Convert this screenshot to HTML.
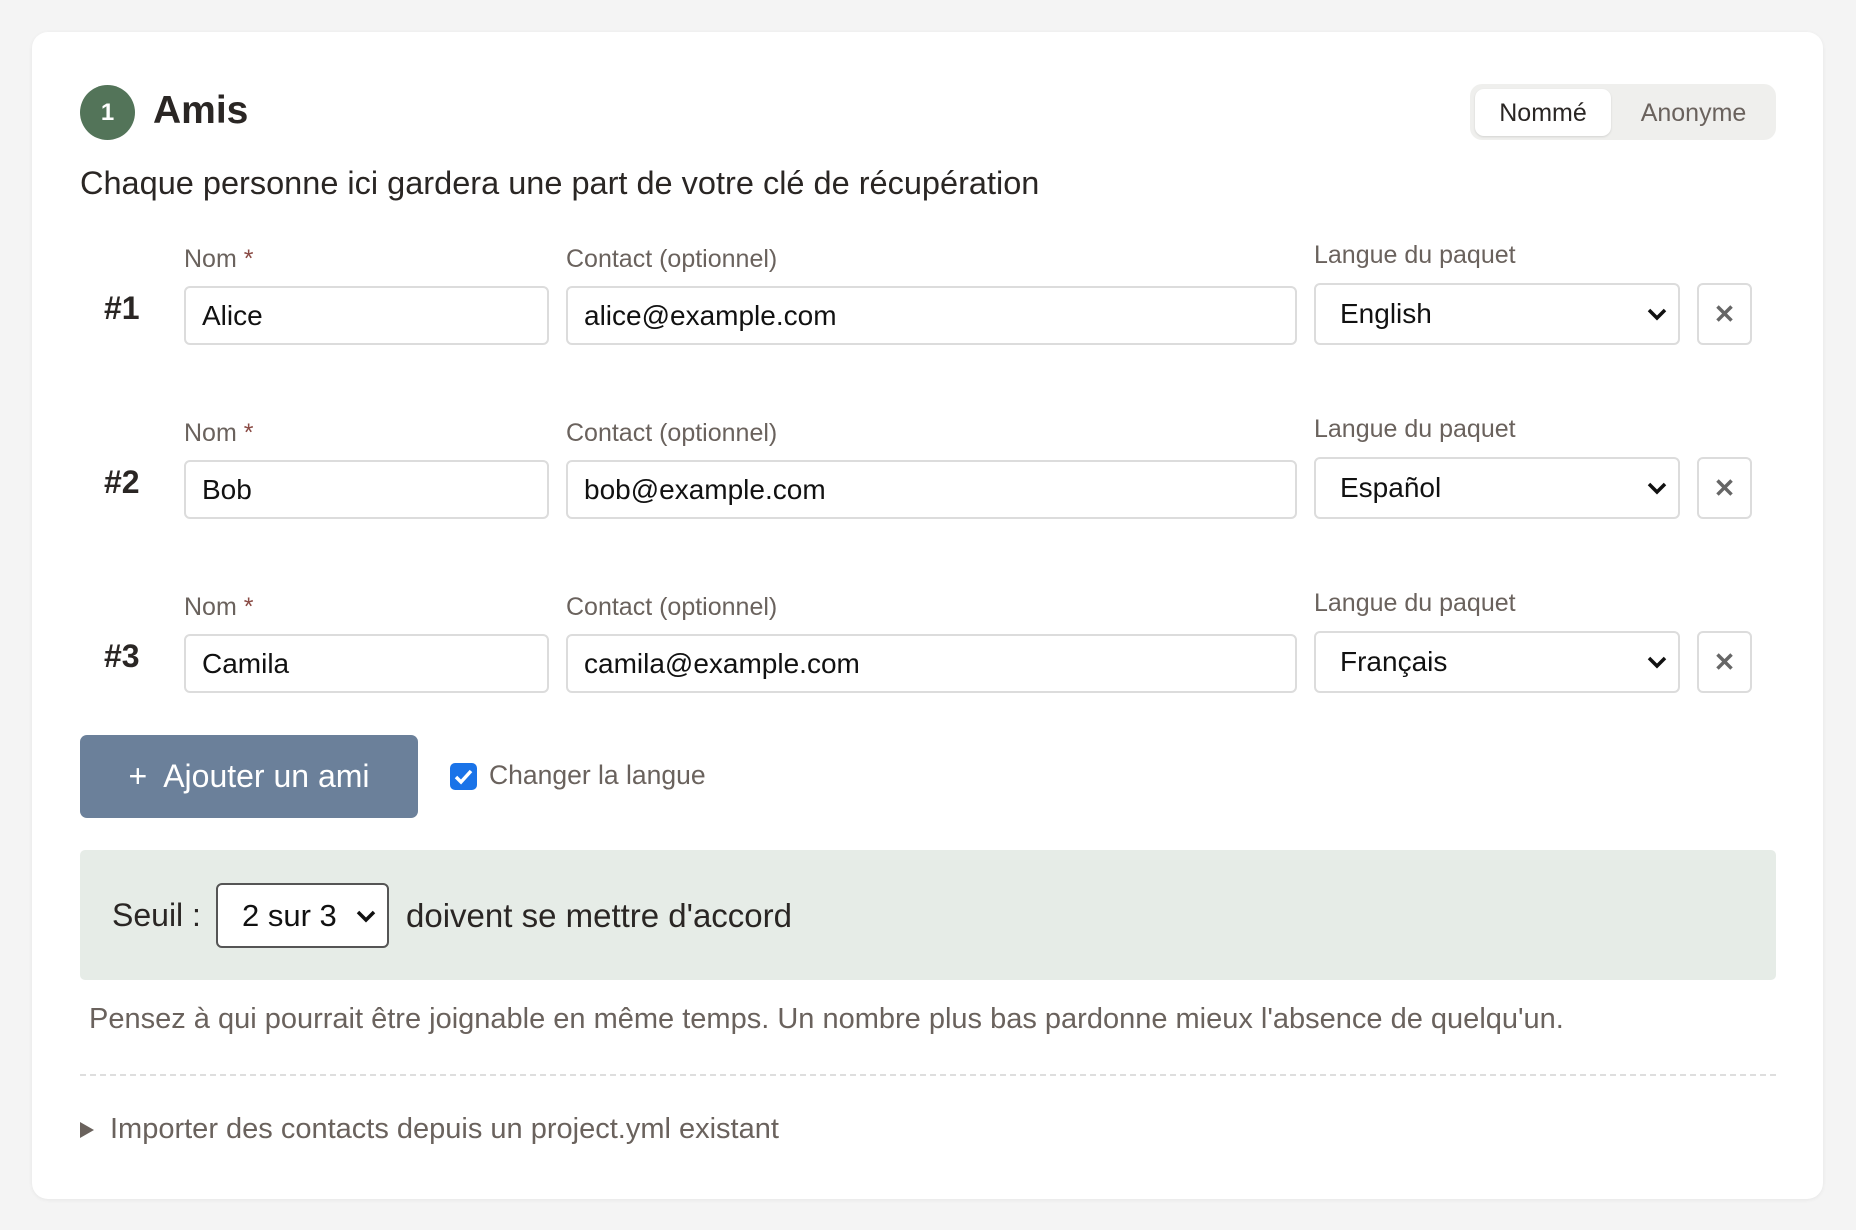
<!DOCTYPE html>
<html><head><meta charset="utf-8"><style>
*{box-sizing:border-box;margin:0;padding:0}
body{width:1856px;height:1230px;background:#f4f4f4;font-family:"Liberation Sans",Arial,sans-serif;position:relative;overflow:hidden;color:#2a2624}
.card{position:absolute;left:32px;top:32px;width:1791px;height:1167px;background:#fff;border-radius:16px;box-shadow:0 1px 4px rgba(0,0,0,.06)}
.a{position:absolute}
.circ{left:80px;top:85px;width:55px;height:55px;border-radius:50%;background:#537459;color:#fff;font-size:24px;font-weight:bold;text-align:center;line-height:55px}
.title{left:153px;top:89px;font-size:39px;font-weight:bold;color:#2a2624}
.tog{left:1470px;top:84px;width:306px;height:56px;background:#efefed;border-radius:12px}
.pill{left:1475px;top:89px;width:136px;height:47px;background:#fff;border-radius:9px;box-shadow:0 1px 2px rgba(0,0,0,.12);font-size:25px;text-align:center;line-height:49px;color:#2a2624}
.anon{left:1611px;top:89px;width:165px;height:47px;font-size:25px;text-align:center;line-height:49px;color:#6a625d}
.sub{left:80px;top:165px;font-size:32.5px;color:#2a2624}
.lbl{font-size:25px;color:#6a625d}
.lbl b{color:#8a4b45;font-weight:normal}
.inp{border:2px solid #dcdcdc;border-radius:6px;background:#fff;font-size:28px;color:#111;padding-left:16px;display:flex;align-items:center}
.num{font-size:32px;font-weight:bold;color:#2a2624}
.x{border:2px solid #dcdcdc;border-radius:6px;background:#fff;color:#666;font-size:26px;font-weight:bold;display:flex;align-items:center;justify-content:center}
.chev{position:absolute;right:10px;top:50%;margin-top:-7px}
</style></head><body>
<div class="card"></div>
<div class="a circ">1</div>
<div class="a title">Amis</div>
<div class="a tog"></div>
<div class="a pill">Nommé</div>
<div class="a anon">Anonyme</div>
<div class="a sub">Chaque personne ici gardera une part de votre clé de récupération</div>

<div class="a lbl" style="left:184px;top:245px">Nom <b>*</b></div>
<div class="a lbl" style="left:566px;top:245px">Contact (optionnel)</div>
<div class="a lbl" style="left:1314px;top:241px">Langue du paquet</div>
<div class="a num" style="left:104px;top:290px">#1</div>
<div class="a inp" style="left:184px;top:286px;width:365px;height:59px">Alice</div>
<div class="a inp" style="left:566px;top:286px;width:731px;height:59px">alice@example.com</div>
<div class="a inp" style="left:1314px;top:283px;width:366px;height:62px;padding-left:24px">English<svg class="chev" width="22" height="14" viewBox="0 0 22 14"><path d="M3 3l8 8 8-8" stroke="#111" stroke-width="3.5" fill="none"/></svg></div>
<div class="a x" style="left:1697px;top:283px;width:55px;height:62px">✕</div>

<div class="a lbl" style="left:184px;top:419px">Nom <b>*</b></div>
<div class="a lbl" style="left:566px;top:419px">Contact (optionnel)</div>
<div class="a lbl" style="left:1314px;top:415px">Langue du paquet</div>
<div class="a num" style="left:104px;top:464px">#2</div>
<div class="a inp" style="left:184px;top:460px;width:365px;height:59px">Bob</div>
<div class="a inp" style="left:566px;top:460px;width:731px;height:59px">bob@example.com</div>
<div class="a inp" style="left:1314px;top:457px;width:366px;height:62px;padding-left:24px">Español<svg class="chev" width="22" height="14" viewBox="0 0 22 14"><path d="M3 3l8 8 8-8" stroke="#111" stroke-width="3.5" fill="none"/></svg></div>
<div class="a x" style="left:1697px;top:457px;width:55px;height:62px">✕</div>

<div class="a lbl" style="left:184px;top:593px">Nom <b>*</b></div>
<div class="a lbl" style="left:566px;top:593px">Contact (optionnel)</div>
<div class="a lbl" style="left:1314px;top:589px">Langue du paquet</div>
<div class="a num" style="left:104px;top:638px">#3</div>
<div class="a inp" style="left:184px;top:634px;width:365px;height:59px">Camila</div>
<div class="a inp" style="left:566px;top:634px;width:731px;height:59px">camila@example.com</div>
<div class="a inp" style="left:1314px;top:631px;width:366px;height:62px;padding-left:24px">Français<svg class="chev" width="22" height="14" viewBox="0 0 22 14"><path d="M3 3l8 8 8-8" stroke="#111" stroke-width="3.5" fill="none"/></svg></div>
<div class="a x" style="left:1697px;top:631px;width:55px;height:62px">✕</div>

<div class="a" style="left:80px;top:735px;width:338px;height:83px;background:#6b809a;border-radius:7px;color:#fff;font-size:32px;display:flex;align-items:center;justify-content:center">+&nbsp; Ajouter un ami</div>
<div class="a" style="left:450px;top:763px;width:27px;height:27px;background:#1a73e8;border-radius:5px"><svg width="27" height="27" viewBox="0 0 27 27"><path d="M6 14l5 5 10-11" stroke="#fff" stroke-width="3.5" fill="none"/></svg></div>
<div class="a" style="left:489px;top:760px;font-size:26.5px;color:#6a625d">Changer la langue</div>

<div class="a" style="left:80px;top:850px;width:1696px;height:130px;background:#e6ece7;border-radius:5px"></div>
<div class="a" style="left:112px;top:897px;font-size:32px;color:#2a2624">Seuil :</div>
<div class="a inp" style="left:216px;top:883px;width:173px;height:65px;border-color:#555;padding-left:24px;font-size:31px">2 sur 3<svg class="chev" width="22" height="14" viewBox="0 0 22 14"><path d="M3 3l8 8 8-8" stroke="#111" stroke-width="3.5" fill="none"/></svg></div>
<div class="a" style="left:406px;top:897px;font-size:33px;color:#2a2624">doivent se mettre d'accord</div>

<div class="a" style="left:89px;top:1003px;font-size:29px;color:#6a625d">Pensez à qui pourrait être joignable en même temps. Un nombre plus bas pardonne mieux l'absence de quelqu'un.</div>
<div class="a" style="left:80px;top:1074px;width:1696px;border-top:2px dashed #dedede"></div>
<div class="a" style="left:80px;top:1122px;width:0;height:0;border-left:14px solid #6a625d;border-top:8px solid transparent;border-bottom:8px solid transparent"></div>
<div class="a" style="left:110px;top:1113px;font-size:29px;color:#6a625d">Importer des contacts depuis un project.yml existant</div>
</body></html>
